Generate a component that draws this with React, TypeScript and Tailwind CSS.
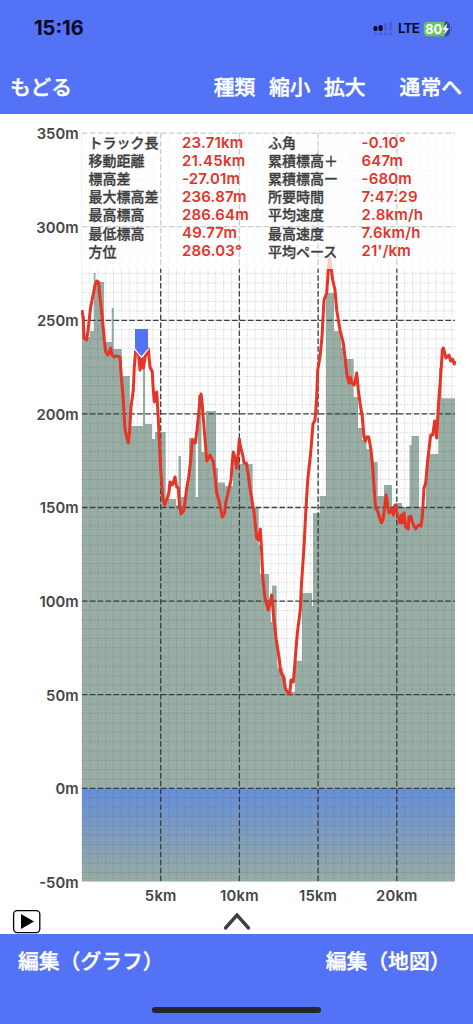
const STATS_LEFT = [
  { label: "トラック長", value: "23.71km" },
  { label: "移動距離", value: "21.45km" },
  { label: "標高差", value: "-27.01m" },
  { label: "最大標高差", value: "236.87m" },
  { label: "最高標高", value: "286.64m" },
  { label: "最低標高", value: "49.77m" },
  { label: "方位", value: "286.03°" },
];

const STATS_RIGHT = [
  { label: "ふ角", value: "-0.10°" },
  { label: "累積標高＋", value: "647m" },
  { label: "累積標高ー", value: "-680m" },
  { label: "所要時間", value: "7:47:29" },
  { label: "平均速度", value: "2.8km/h" },
  { label: "最高速度", value: "7.6km/h" },
  { label: "平均ペース", value: "21'/km" },
];

// plot area
const LEFT = 82;
const RIGHT = 455;
const TOP = 133;
const BOTTOM = 881.5;
const SEA = 788.3;
const STEP_X = 78.7; // 5km
const STEP_Y = 93.6; // 50m

const Y_TICKS = [350, 300, 250, 200, 150, 100, 50, 0, -50];
const X_TICKS = [5, 10, 15, 20];

const yOf = (m: number) => SEA - (m / 50) * STEP_Y;
const xOf = (km: number) => LEFT + (km / 5) * STEP_X;

// [right edge, top] of each step of the ground elevation
const GROUND = [
  [85, 316], [90, 337], [93.7, 331], [95.5, 273], [104, 282], [111.7, 342],
  [113.7, 308], [121.7, 349], [129.7, 376], [143, 426], [145, 352], [152, 424],
  [155, 439], [165.7, 432], [176, 499], [178.5, 505], [181, 456], [187, 497],
  [189, 480], [195.7, 438], [198, 497], [201.5, 395], [206, 452], [216, 411],
  [218, 468], [225, 482.5], [233, 486], [240, 460], [252.7, 464], [258.7, 507.5],
  [260, 545], [269, 574], [270.7, 604], [272, 622], [276.7, 585.5], [277.5, 645],
  [283.3, 668], [286, 677], [295, 692], [302, 660.7], [312, 593], [313, 606],
  [319.7, 513], [326, 496], [334, 293], [341.3, 331], [343.5, 348], [353.7, 359],
  [358, 397], [362, 428], [366.5, 440], [371, 449], [377.7, 462], [384, 496],
  [392, 485], [396, 506], [402, 503], [409.5, 507], [411.5, 445], [419, 436],
  [426, 507], [428, 475], [438.3, 454], [439, 400], [441.7, 368], [455, 398.3],
];

const TRACK =
  "82,310 83.3,320 84,338 86.5,340 88,331 90.5,308 92.7,297 95,285 96.7,281 98.5,282 100,297 102.5,320 104.3,340 105.7,352 108,355 110.7,348 112,355 114,357 115.7,356 120,357 121,373 123.3,400 125,430 128.3,443 129.7,430 131,407 133.3,390 134.3,367 135.7,351 138.3,351 140,370 141.5,357 143.3,368 145,358 146.7,351 148.3,349 150,367 152.3,372 153,386 154.3,402 156.7,392 158,413 159.3,440 160.7,470 162.7,497 164.7,505 167.3,498 169,492 170,482 172.3,485 175,477 176.7,487 178.3,488 179.3,503 181,514 183.7,511 185,502 186.7,488 188.7,477 190.7,460 192.3,440 195.3,443 197,430 198.7,413 200.3,397 201,394 202.3,405 203.7,423 205.3,443 206.7,461 210,455 213.3,462 214.7,473 216.7,493 219.3,502 222.3,517 224.7,513 225.7,503 228.7,490 231,480 232.3,462 233.3,452 235,458 236.7,468 238.3,453 239.3,439 240.7,448 242.7,455 244,463 246.3,463 248.3,475 250.7,493 254,512 256.7,538 258.7,540 260.3,529 261.7,553 263,580 265,598 268.3,610 271.7,595 273.7,617 276.3,640 279,657 280.7,672 283.3,676 285.3,688 287.3,692 289.7,694 291,680 293.3,682 295,662 297.3,633 300.3,610 301.3,587 304,547 305.7,513 307.7,480 310.7,453 313,424 315,420 316.7,397 317.7,370 320,357 322,337 324,300 326.7,293 328.3,270 329.7,258 331.3,270 332.7,280 335,290 336.7,310 340,330 343.3,343 345.3,360 347,375 349,383 350.3,377 351.7,383 354.3,385 356.7,373 358.3,390 360,403 362.3,417 364,437 365.3,441 366.7,437 368.7,437 371,450 372.7,467 374.7,497 375.7,508 378,512 381.3,523 383,520 384.3,510 386,495 387.7,505 389,513 391.7,509 393.3,515 395,505 396.7,512 398.3,517 400,523 401.3,515 402.3,523 404,513 405.7,527 408.3,529 409,517 410.7,516 412.7,523 415.7,529 418.3,525 421,526 422.3,517 424,488 425.7,483 427.7,460 430.7,435 432.7,435 434.7,421 436.7,438 438.3,407 441.3,367 442.3,350 443.3,348 446,358 449,355 450.7,361 452.5,359 454.3,364 455,361";

function groundPath() {
  let d = `M${LEFT} ${SEA}`;
  GROUND.forEach(([x, y]) => {
    d += `V${y}H${x}`;
  });
  return d + `V${SEA}Z`;
}

function StatusIcons() {
  return (
    <div className="flex items-center">
      <svg width="20" height="16" viewBox="0 0 20 16">
        <g fill="#050a22">
          <rect x="0.5" y="5" width="4" height="5" rx="1.6" />
          <rect x="5.6" y="4" width="4" height="6" rx="1.6" />
        </g>
        <g fill="#4760d8">
          <rect x="10.8" y="2.3" width="3.4" height="7.5" rx="1.2" />
          <rect x="15.9" y="0.7" width="3.4" height="9.1" rx="1.2" />
          <rect x="0.6" y="11.6" width="3.4" height="2.6" rx="1" />
          <rect x="5.7" y="11.6" width="3.4" height="2.6" rx="1" />
          <rect x="10.8" y="11.6" width="3.4" height="2.6" rx="1" />
          <rect x="15.9" y="11.6" width="3.4" height="2.6" rx="1" />
        </g>
      </svg>
      <span className="ml-[5px] w-[21px] text-[13.5px] font-semibold tracking-[-0.8px] text-[#050a22]">LTE</span>
      <svg className="ml-[4px]" width="30" height="16" viewBox="0 0 30 16">
        <defs>
          <clipPath id="battery">
            <rect x="0.5" y="0.5" width="26.5" height="15" rx="4.5" />
          </clipPath>
        </defs>
        <g clipPath="url(#battery)">
          <rect width="30" height="16" fill="#35489f" />
          <rect width="21.5" height="16" fill="#67c667" />
        </g>
        <path d="M28 5.5Q30 8 28 10.5Z" fill="#3f57cb" />
        <text x="2.2" y="13" fontSize="13.5" fontWeight="700" fill="#fff" textLength="17" lengthAdjust="spacingAndGlyphs">
          80
        </text>
        <path d="M24.2 2.2L19.3 8.7H22L21 14L26 7.3H23.2Z" fill="#fff" />
      </svg>
    </div>
  );
}

function Chart() {
  const minorX = Array.from({ length: 48 }, (_, i) => xOf(i / 2));
  const minorY = Array.from({ length: 80 }, (_, i) => yOf(350 - i * 5));

  return (
    <svg className="block" width="473" height="820" viewBox="0 114 473 820">
      <defs>
        <linearGradient id="sea" x1="0" y1="0" x2="0" y2="1">
          <stop offset="0" stopColor="#678fda" />
          <stop offset="0.5" stopColor="#7d9cbe" />
          <stop offset="1" stopColor="#98aca2" />
        </linearGradient>
        <clipPath id="plot">
          <rect x="81" y={TOP} width="375" height={BOTTOM - TOP} />
        </clipPath>
      </defs>

      <path d={groundPath()} fill="#98ada3" />
      <rect x={LEFT} y={SEA} width={RIGHT - LEFT} height={BOTTOM - SEA} fill="url(#sea)" />

      {/* Minor grid */}
      <g stroke="#404a48" strokeWidth="0.7" strokeOpacity="0.24">
        {minorX.map((x) => (
          <line key={x} x1={x} x2={x} y1={TOP} y2={BOTTOM} strokeDasharray="2 1" />
        ))}
        {minorY.map((y) => (
          <line key={y} x1={LEFT} x2={RIGHT} y1={y} y2={y} strokeDasharray="2 1" />
        ))}
      </g>

      {/* Major grid */}
      <g stroke="#3a3f40" strokeWidth="1.3" strokeDasharray="5.5 2.4">
        {Y_TICKS.slice(0, -1).map((m) => (
          <line key={m} x1={LEFT} x2={RIGHT} y1={yOf(m)} y2={yOf(m)} />
        ))}
        {X_TICKS.map((km) => (
          <line key={km} x1={xOf(km)} x2={xOf(km)} y1={TOP} y2={BOTTOM} />
        ))}
      </g>

      <polyline
        points={TRACK}
        fill="none"
        stroke="#e63426"
        strokeWidth="3"
        strokeLinejoin="round"
        clipPath="url(#plot)"
      />
      <path d="M135 329H148V348.5L141.5 357L135 348.5Z" fill="#5472f6" />
      <path d="M134.5 348.8L141.5 357.3L148.5 348.8" fill="none" stroke="#fff" strokeWidth="1.2" />

      {/* Axis labels */}
      <g fill="#454547" fontSize="14.8" fontWeight="600">
        {Y_TICKS.map((m) => (
          <text key={m} x="78.5" y={yOf(m) + 5.8} textAnchor="end">
            {m}m
          </text>
        ))}
        {X_TICKS.map((km) => (
          <text key={km} x={xOf(km)} y="900.5" textAnchor="middle" letterSpacing="0.2">
            {km}km
          </text>
        ))}
      </g>

      <rect x="13.6" y="910.6" width="26.2" height="22" rx="3.5" fill="#fff" stroke="#000" strokeWidth="1.3" />
      <path d="M21 914V929L34 921.5Z" fill="#000" />
      <path d="M225.5 928L237 915L248.5 928" fill="none" stroke="#3f3f41" strokeWidth="3.4" strokeLinecap="round" />
    </svg>
  );
}

function StatColumn({ stats }: { stats: typeof STATS_LEFT }) {
  return (
    <dl>
      {stats.map((s) => (
        <div key={s.label} className="flex h-[18.1px] items-center whitespace-nowrap">
          <dt className="w-[93.5px] text-[14px] font-medium text-[#3d3d3f] [-webkit-text-stroke:0.3px]">{s.label}</dt>
          <dd className="pt-px text-[15px] font-semibold tracking-[0.2px] text-[#e3342b]">{s.value}</dd>
        </div>
      ))}
    </dl>
  );
}

export default function App() {
  return (
    <div className="flex h-[1024px] w-[473px] flex-col overflow-hidden bg-white font-['Inter','Noto_Sans_CJK_JP',sans-serif]">
      <header className="h-[114px] bg-[#5472f6]">
        <div className="flex h-[57px] items-end justify-between pr-[20px] pl-[34px]">
          <span className="text-[20px] leading-[57px] font-bold text-[#050a22]">15:16</span>
          <div className="flex h-[57px] items-center">
            <StatusIcons />
          </div>
        </div>
        <nav className="flex h-[61px] items-center pr-[11px] pl-[10px] text-[20.8px] font-medium text-white [-webkit-text-stroke:0.4px]">
          <span>もどる</span>
          <div className="ml-auto flex gap-[13.5px]">
            <span>種類</span>
            <span>縮小</span>
            <span>拡大</span>
          </div>
          <span className="ml-[34px]">通常へ</span>
        </nav>
      </header>

      <main className="relative h-[820px]">
        <Chart />
        <div className="absolute top-[14px] left-[82px] flex h-[141px] w-[376px] bg-white/75 pt-[5.5px] pl-[6.5px]">
          <div className="w-[179.5px]">
            <StatColumn stats={STATS_LEFT} />
          </div>
          <StatColumn stats={STATS_RIGHT} />
        </div>
      </main>

      <footer className="flex h-[90px] flex-col items-center bg-[#5472f6]">
        <div className="flex h-[55px] w-full items-center justify-between pr-[22.5px] pl-[18px] text-[20.8px] font-medium text-white [-webkit-text-stroke:0.4px]">
          <span>編集（グラフ）</span>
          <span>編集（地図）</span>
        </div>
        <div className="mt-[18px] h-[6px] w-[169px] rounded-full bg-[#262729]" />
      </footer>
    </div>
  );
}
